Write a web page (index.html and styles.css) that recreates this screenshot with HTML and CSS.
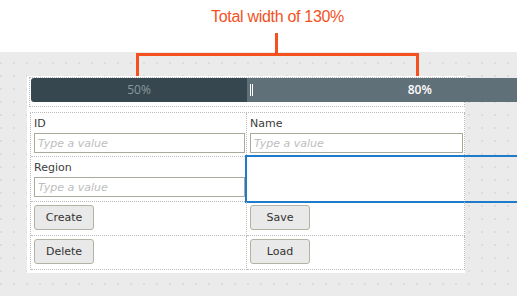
FILE: index.html
```html
<!DOCTYPE html>
<html lang="en">
<head>
    <meta charset="UTF-8">
    <meta name="viewport" content="width=device-width, initial-scale=1.0">
    <title>Splitter width</title>
    <link rel="stylesheet" href="styles.css">
</head>
<body>
    <!-- Nota sobre el ancho total -->
    <div class="note">
        <div class="note-box">
            <div class="note-text">Total width of 130%</div>
            <span class="note-stem"></span>
            <span class="note-brace"></span>
        </div>
    </div>

    <div class="stage">
        <div class="panel">
            <div class="bar-wrap">
                <div class="bar">
                    <div class="bar-part bar-left">50%</div>
                    <div class="bar-part bar-right"><span class="grip"></span>80%</div>
                </div>
            </div>

            <div class="grid">
                <div class="cell">
                    <label for="id">ID</label>
                    <input type="text" id="id" placeholder="Type a value">
                </div>
                <div class="cell">
                    <label for="name">Name</label>
                    <input type="text" id="name" placeholder="Type a value">
                </div>
                <div class="cell">
                    <label for="region">Region</label>
                    <input type="text" id="region" placeholder="Type a value">
                </div>
                <div class="cell selected">
                    <span class="highlight"></span>
                </div>
                <div class="cell cell-btn">
                    <button>Create</button>
                </div>
                <div class="cell cell-btn">
                    <button>Save</button>
                </div>
                <div class="cell cell-btn">
                    <button>Delete</button>
                </div>
                <div class="cell cell-btn">
                    <button>Load</button>
                </div>
            </div>
        </div>
    </div>
</body>
</html>
```

FILE: styles.css
```css
html, body {
    margin: 0;
    overflow: hidden;
}
body {
    font-family: "DejaVu Sans", Verdana, sans-serif;
    font-size: 11px;
    color: #444;
    background-color: #ebebeb;
}
.note {
    height: 52px;
    background-color: white;
    position: relative;
    z-index: 2;
}
.note-box {
    position: relative;
    margin-left: 136px;
    width: 283px;
    height: 52px;
}
.note-text {
    padding-top: 7px;
    font-family: "Liberation Sans", Arial, sans-serif;
    font-size: 16px;
    line-height: 19px;
    letter-spacing: -0.3px;
    text-align: center;
    color: #f4511e;
}
.note-stem {
    position: absolute;
    top: 33px;
    left: 139px;
    width: 3px;
    height: 20px;
    background-color: #f4511e;
}
.note-brace {
    position: absolute;
    top: 53px;
    left: 0;
    width: 277px;
    height: 20px;
    border: 3px solid #f4511e;
    border-bottom: none;
}
.stage {
    height: 244px;
    padding-top: 24px;
    box-sizing: border-box;
    background-color: #ebebeb;
    background-image:
        linear-gradient(90deg, transparent 2px, #ebebeb 2px),
        linear-gradient(#dcdcdc 2px, #ebebeb 2px);
    background-size: 13px 13px;
    background-position: 0 10px;
}
.panel {
    margin-left: 27px;
    width: 438px;
    padding: 1px 0 3px 2px;
    box-sizing: border-box;
    background-color: white;
}
.bar-wrap {
    border: 1px dotted #bbb;
    padding: 0 1px 4px 1px;
}
.bar {
    display: flex;
    height: 24px;
    font-family: "Open Sans", sans-serif;
    font-size: 12px;
    line-height: 24px;
}
.bar-part {
    flex: none;
    text-align: center;
}
.bar-left {
    width: 50%;
    background-color: #37474f;
    color: #8c989e;
    border-radius: 3px 0 0 3px;
}
.bar-right {
    width: 80%;
    position: relative;
    background-color: #5f7078;
    color: white;
    font-weight: 600;
}
.grip {
    position: absolute;
    left: 3px;
    top: 6px;
    width: 1px;
    height: 12px;
    border-left: 1px solid white;
    border-right: 1px solid white;
}
.grid {
    display: grid;
    grid-template-columns: 216px 1fr;
    margin: 5px 0 0 1px;
    border-top: 1px dotted #bbb;
    border-left: 1px dotted #bbb;
}
.cell {
    position: relative;
    padding: 4px 1px 3px 3px;
    border-right: 1px dotted #bbb;
    border-bottom: 1px dotted #bbb;
}
.cell label {
    display: block;
    line-height: 14px;
    margin-bottom: 2px;
    color: #3c3c3c;
}
.cell input {
    display: block;
    width: 100%;
    height: 20px;
    box-sizing: border-box;
    margin: 0;
    padding: 0 3px;
    border: 1px solid #aaa99a;
    border-radius: 0;
    font-family: "DejaVu Sans", Verdana, sans-serif;
    font-size: 11px;
    color: #444;
}
.cell input::placeholder {
    color: #bdbdbd;
    font-style: italic;
}
.selected {
    min-height: 37px;
}
.highlight {
    position: absolute;
    left: -2px;
    top: -2px;
    bottom: -2px;
    width: 300px;
    border: 2px solid #1f7bc9;
}
.cell-btn {
    padding: 3px 1px 5px 3px;
}
.cell-btn button {
    display: block;
    width: 60px;
    height: 25px;
    padding: 0;
    border: 1px solid #b2b2a2;
    border-radius: 3px;
    background-color: #e9e9e9;
    font-family: "DejaVu Sans", Verdana, sans-serif;
    font-size: 11px;
    color: #333;
    cursor: pointer;
}
```
